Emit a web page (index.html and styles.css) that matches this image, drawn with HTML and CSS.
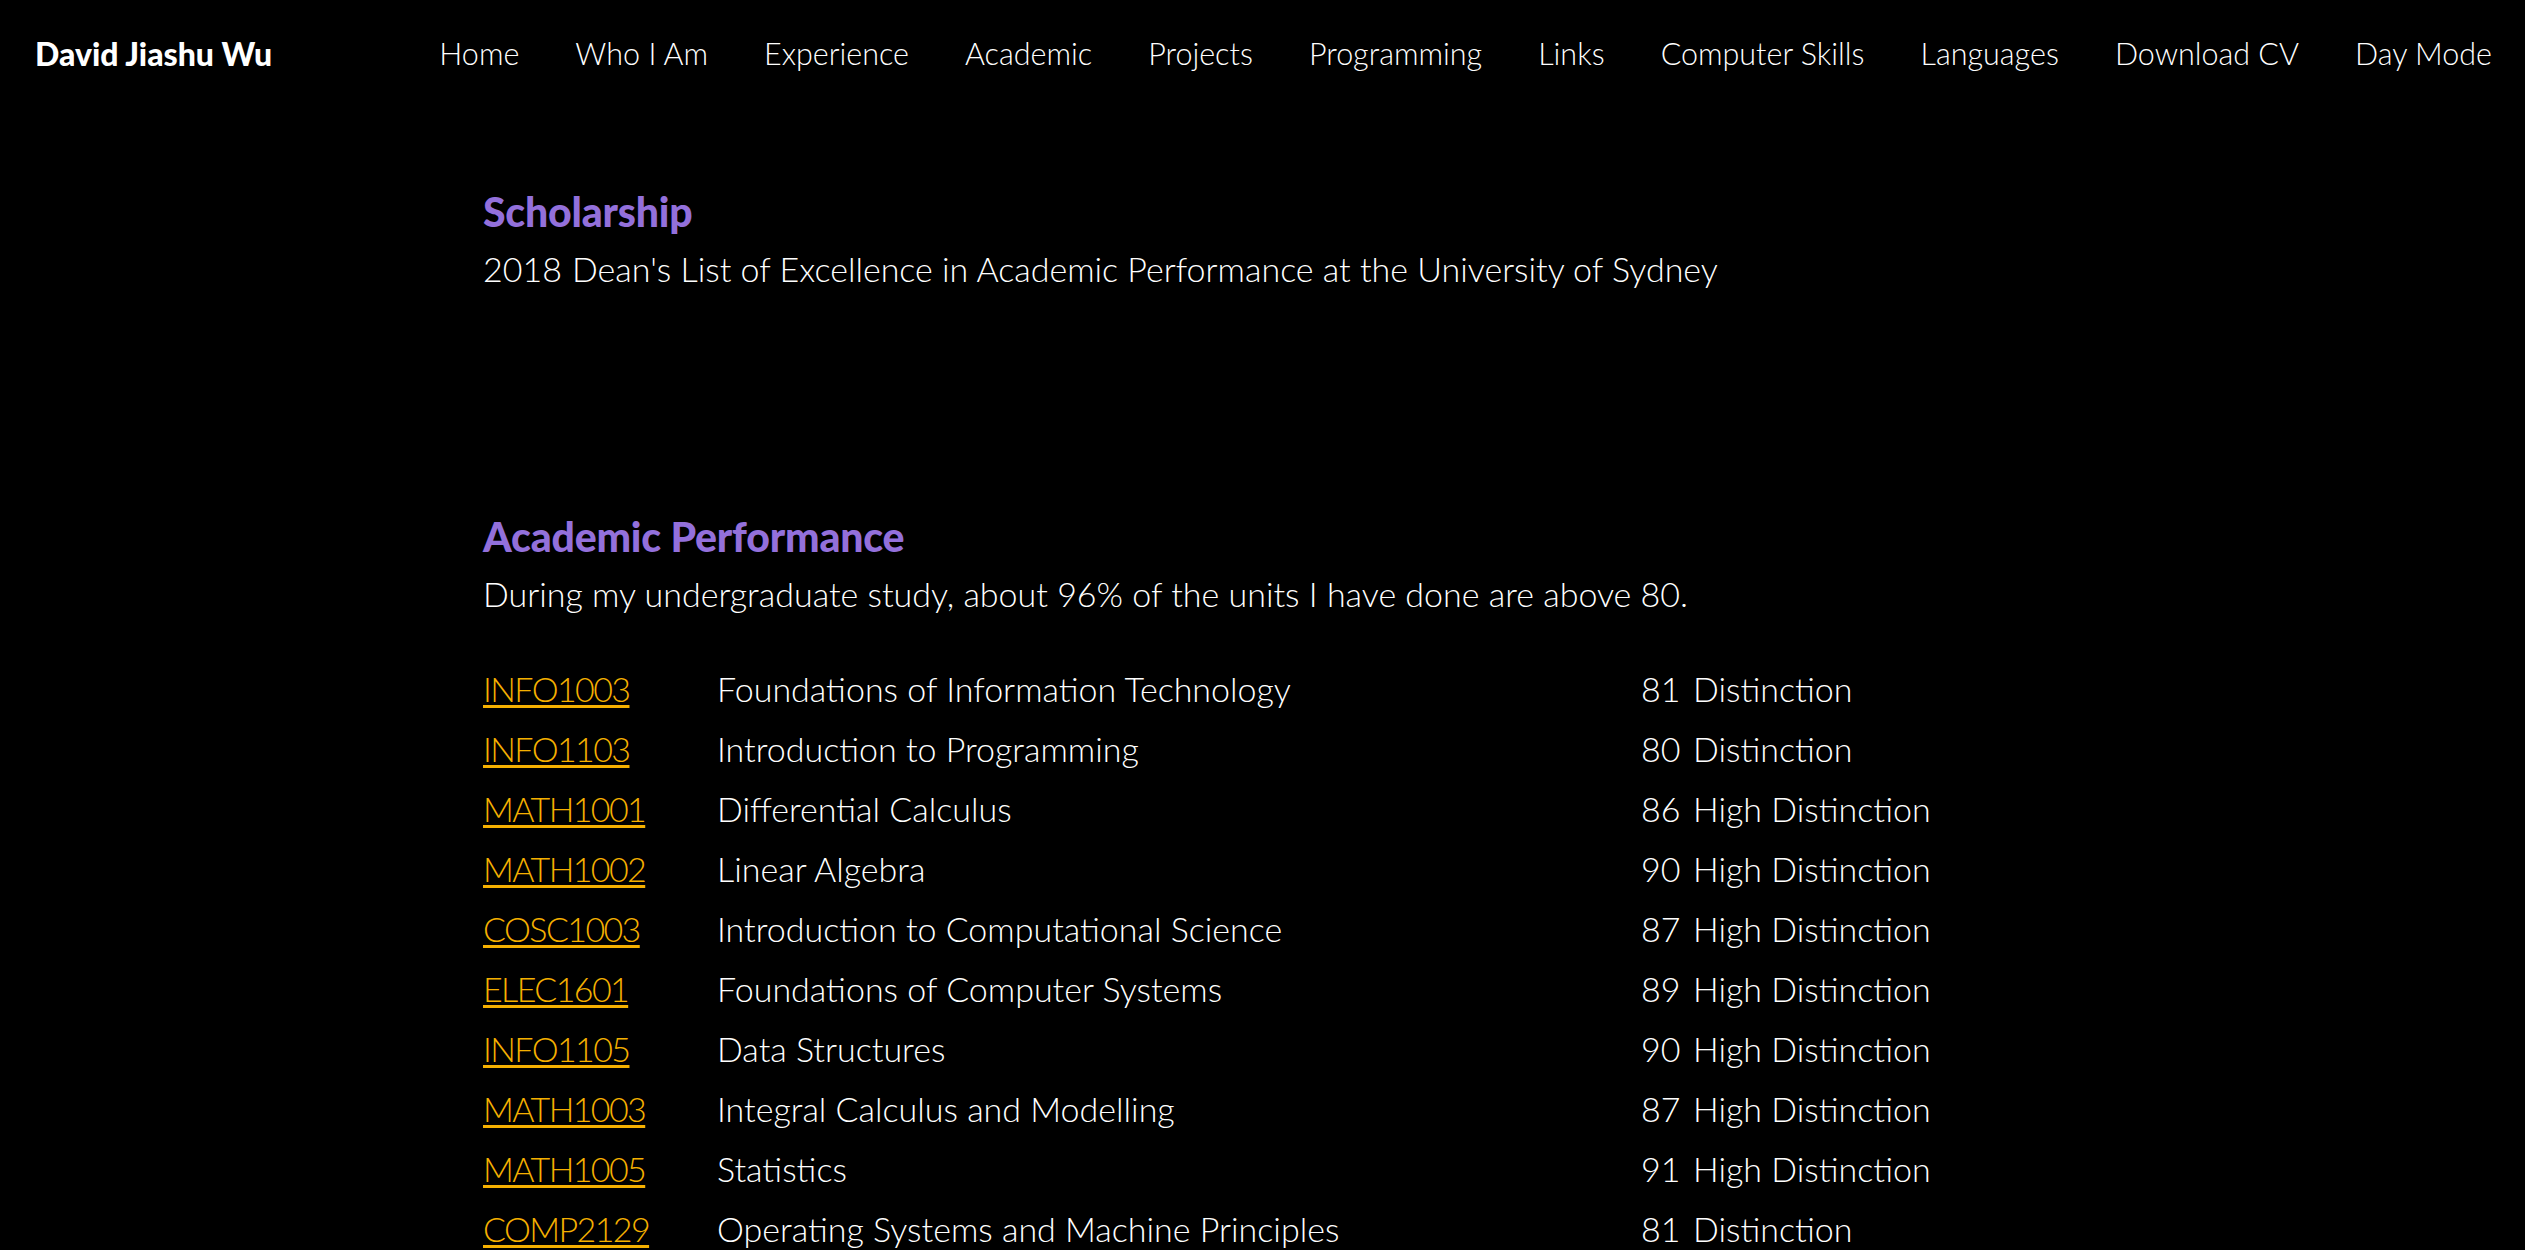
FILE: index.html
```html
<!DOCTYPE html>
<html lang="en">
<head>
<meta charset="utf-8">
<title>David Jiashu Wu</title>
<link rel="stylesheet" href="styles.css">
</head>
<body>
<header class="topbar">
  <div class="brand">David Jiashu Wu</div>
  <nav class="nav">
    <a class="nav-link" href="#">Home</a>
    <a class="nav-link" href="#">Who I Am</a>
    <a class="nav-link" href="#">Experience</a>
    <a class="nav-link" href="#">Academic</a>
    <a class="nav-link" href="#">Projects</a>
    <a class="nav-link" href="#">Programming</a>
    <a class="nav-link" href="#">Links</a>
    <a class="nav-link" href="#">Computer Skills</a>
    <a class="nav-link" href="#">Languages</a>
    <a class="nav-link" href="#">Download CV</a>
    <a class="nav-link" href="#">Day Mode</a>
  </nav>
</header>
<main class="content">
  <section class="section section-scholarship">
    <h2 class="section-title">Scholarship</h2>
    <div class="award">
      <span class="award-year">2018</span>
      <span class="award-name">Dean's List of Excellence in Academic Performance at the University of Sydney</span>
    </div>
  </section>
  <section class="section section-performance">
    <h2 class="section-title">Academic Performance</h2>
    <p class="intro">During my undergraduate study, about 96% of the units I have done are above 80.</p>
    <div class="units">
      <div class="unit"><a class="unit-code" href="#">INFO1003</a><span class="unit-name">Foundations of Information Technology</span><span class="unit-mark">81</span><span class="unit-grade">Distinction</span></div>
      <div class="unit"><a class="unit-code" href="#">INFO1103</a><span class="unit-name">Introduction to Programming</span><span class="unit-mark">80</span><span class="unit-grade">Distinction</span></div>
      <div class="unit"><a class="unit-code" href="#">MATH1001</a><span class="unit-name">Differential Calculus</span><span class="unit-mark">86</span><span class="unit-grade">High Distinction</span></div>
      <div class="unit"><a class="unit-code" href="#">MATH1002</a><span class="unit-name">Linear Algebra</span><span class="unit-mark">90</span><span class="unit-grade">High Distinction</span></div>
      <div class="unit"><a class="unit-code" href="#">COSC1003</a><span class="unit-name">Introduction to Computational Science</span><span class="unit-mark">87</span><span class="unit-grade">High Distinction</span></div>
      <div class="unit"><a class="unit-code" href="#">ELEC1601</a><span class="unit-name">Foundations of Computer Systems</span><span class="unit-mark">89</span><span class="unit-grade">High Distinction</span></div>
      <div class="unit"><a class="unit-code" href="#">INFO1105</a><span class="unit-name">Data Structures</span><span class="unit-mark">90</span><span class="unit-grade">High Distinction</span></div>
      <div class="unit"><a class="unit-code" href="#">MATH1003</a><span class="unit-name">Integral Calculus and Modelling</span><span class="unit-mark">87</span><span class="unit-grade">High Distinction</span></div>
      <div class="unit"><a class="unit-code" href="#">MATH1005</a><span class="unit-name">Statistics</span><span class="unit-mark">91</span><span class="unit-grade">High Distinction</span></div>
      <div class="unit"><a class="unit-code" href="#">COMP2129</a><span class="unit-name">Operating Systems and Machine Principles</span><span class="unit-mark">81</span><span class="unit-grade">Distinction</span></div>
    </div>
  </section>
</main>
</body>
</html>
```
FILE: styles.css
```css
html, body {
  margin: 0;
  padding: 0;
  background: #000;
}

body {
  color: #fff;
  font-family: Lato, "Open Sans", "Liberation Sans", sans-serif;
  font-weight: 300;
  overflow: hidden;
  height: 1250px;
}

.topbar {
  display: flex;
  align-items: center;
  justify-content: space-between;
  height: 106px;
  padding: 0 33px 0 35px;
}

.brand {
  font-weight: 900;
  font-size: 32px;
  color: #fff;
}

.nav {
  display: flex;
  gap: 56px;
}

.nav-link {
  color: #fff;
  text-decoration: none;
  font-size: 30.5px;
  font-weight: 300;
}

.content {
  width: 1559px;
  margin: 0 auto;
}

.section-scholarship {
  margin-top: 82px;
}

.section-performance {
  margin-top: 214px;
}

.section-title {
  margin: 0 0 3px;
  font-size: 41px;
  line-height: 48px;
  font-weight: 900;
  color: #9370db;
  letter-spacing: -0.2px;
}

.award {
  display: flex;
  font-size: 34px;
  line-height: 60px;
}

.award-year {
  flex: 0 0 89px;
}

.intro {
  margin: 0 0 35px;
  font-size: 34px;
  line-height: 60px;
}

.units {
  font-size: 34px;
  line-height: 60px;
}

.unit {
  display: grid;
  grid-template-columns: 234px 924px 52px auto;
}

.unit-code {
  justify-self: start;
  color: #f5b000;
  letter-spacing: -1.6px;
  text-decoration: underline;
  text-decoration-thickness: 3px;
  text-underline-offset: 3px;
}
```
